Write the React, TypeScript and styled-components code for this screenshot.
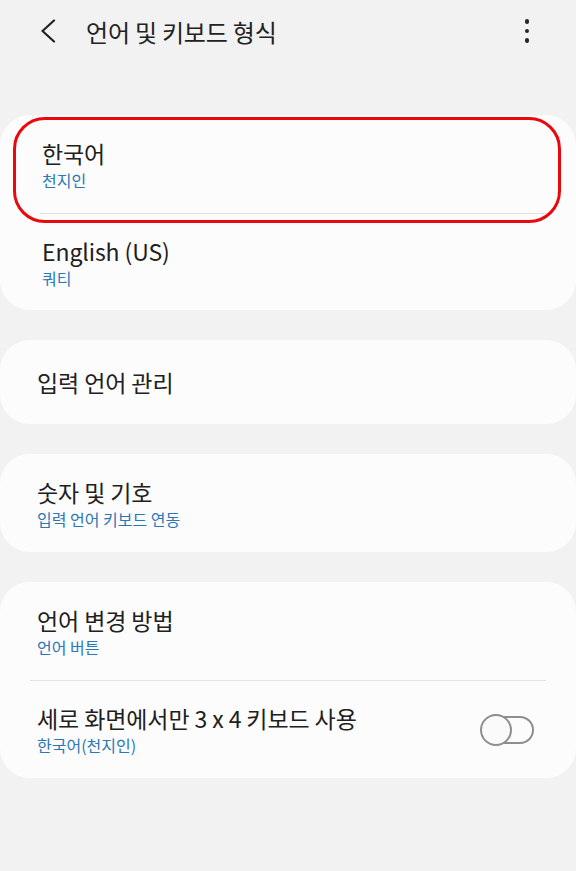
import React from "react";
import styled, { createGlobalStyle } from "styled-components";

const Global = createGlobalStyle`
  html, body { margin: 0; padding: 0; background: #f2f2f2; }
  body { font-family: "Noto Sans CJK KR", "Noto Sans", Roboto, sans-serif; color: #212121; }
  * { box-sizing: border-box; }
`;

const Page = styled.div`
  width: 576px;
  min-height: 871px;
  background: #f2f2f2;
  display: flex;
  flex-direction: column;
`;

const Header = styled.header`
  height: 62px;
  display: flex;
  align-items: center;
  padding: 0 38px 0 36px;
`;

const BackButton = styled.div`
  width: 24px;
  height: 28px;
  display: flex;
  align-items: center;
  justify-content: center;
  margin-right: 26px;
`;

const Title = styled.h1`
  flex: 1;
  margin: 0;
  font-size: 24px;
  font-weight: 400;
  color: #222;
  letter-spacing: -0.2px;
`;

const Kebab = styled.div`
  width: 22px;
  display: flex;
  flex-direction: column;
  align-items: center;
  gap: 5px;
`;

const Dot = styled.span`
  width: 4.5px;
  height: 4.5px;
  border-radius: 50%;
  background: #262626;
`;

const List = styled.div`
  display: flex;
  flex-direction: column;
  gap: 30px;
  padding-top: 53px;
`;

const Card = styled.section`
  position: relative;
  background: #fcfcfc;
  border-radius: 30px;
  display: flex;
  flex-direction: column;
`;

const Row = styled.div<{ $h: number; $inset: number }>`
  height: ${(p) => p.$h}px;
  display: flex;
  align-items: center;
  padding: 0 42px 0 ${(p) => p.$inset}px;
`;

const TextBlock = styled.div`
  flex: 1;
  display: flex;
  flex-direction: column;
`;

const ItemTitle = styled.div`
  font-size: 23px;
  line-height: 30px;
  color: #202020;
  letter-spacing: -0.1px;
`;

const ItemSub = styled.div`
  font-size: 16px;
  line-height: 22px;
  color: #2b78b6;
  margin-top: 1px;
`;

const Divider = styled.div<{ $inset: number }>`
  height: 1px;
  background: #e3e3e3;
  margin: 0 30px 0 ${(p) => p.$inset}px;
`;

const Highlight = styled.div`
  position: absolute;
  left: 13px;
  top: 2px;
  width: 548px;
  height: 106px;
  border: 3px solid #e8080d;
  border-radius: 32px;
  pointer-events: none;
`;

const Switch = styled.div`
  position: relative;
  width: 54px;
  height: 30px;
  flex-shrink: 0;
`;

const Track = styled.div`
  position: absolute;
  left: 2px;
  top: 1px;
  width: 52px;
  height: 28px;
  border: 2px solid #8e8e8e;
  border-radius: 14px;
`;

const Thumb = styled.div`
  position: absolute;
  left: 0;
  top: -1px;
  width: 32px;
  height: 32px;
  border: 2px solid #8e8e8e;
  border-radius: 50%;
  background: #fafafa;
`;

type Item = { title: string; sub?: string; toggle?: boolean };

const Entry: React.FC<{ item: Item; h: number; inset: number }> = ({ item, h, inset }) => (
  <Row $h={h} $inset={inset}>
    <TextBlock>
      <ItemTitle>{item.title}</ItemTitle>
      {item.sub && <ItemSub>{item.sub}</ItemSub>}
    </TextBlock>
    {item.toggle && (
      <Switch>
        <Track />
        <Thumb />
      </Switch>
    )}
  </Row>
);

export default function App() {
  return (
    <Page>
      <Global />
      <Header>
        <BackButton>
          <svg width="18" height="24" viewBox="0 0 18 24">
            <path d="M15 1.5 L3.5 12 L15 22.5" fill="none" stroke="#222" strokeWidth="2.2" strokeLinecap="round" strokeLinejoin="round" />
          </svg>
        </BackButton>
        <Title>언어 및 키보드 형식</Title>
        <Kebab>
          <Dot />
          <Dot />
          <Dot />
        </Kebab>
      </Header>
      <List>
        <Card>
          <Entry item={{ title: "한국어", sub: "천지인" }} h={98} inset={42} />
          <Divider $inset={40} />
          <Entry item={{ title: "English (US)", sub: "쿼티" }} h={96} inset={42} />
          <Highlight />
        </Card>
        <Card>
          <Entry item={{ title: "입력 언어 관리" }} h={84} inset={37} />
        </Card>
        <Card>
          <Entry item={{ title: "숫자 및 기호", sub: "입력 언어 키보드 연동" }} h={98} inset={37} />
        </Card>
        <Card>
          <Entry item={{ title: "언어 변경 방법", sub: "언어 버튼" }} h={98} inset={37} />
          <Divider $inset={30} />
          <Entry item={{ title: "세로 화면에서만 3 x 4 키보드 사용", sub: "한국어(천지인)", toggle: true }} h={97} inset={37} />
        </Card>
      </List>
    </Page>
  );
}
